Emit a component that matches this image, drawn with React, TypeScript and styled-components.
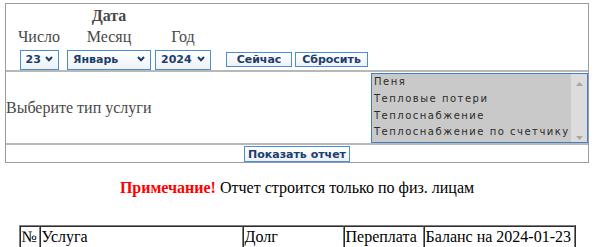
import React from 'react';
import styled, { createGlobalStyle } from 'styled-components';

const GlobalStyle = createGlobalStyle`
  html, body { margin: 0; padding: 0; background: #fff; }
  body {
    font-family: "Liberation Serif", "Times New Roman", serif;
    font-size: 16px;
    color: #000;
  }
`;

const Page = styled.div`
  width: 584px;
  padding: 3px 0 0 5px;
`;

const Panel = styled.div`
  width: 584px;
  box-sizing: border-box;
  border: 1px solid #9c9c9c;
  display: flex;
  flex-direction: column;
`;

const DateRow = styled.div`
  height: 68px;
  box-sizing: border-box;
  padding: 3px 0 0 9px;
  border-bottom: 2px solid #b8b8b8;
`;

const DateGrid = styled.div`
  display: grid;
  grid-template-columns: 48px 92px 56px auto;
  grid-template-rows: 18px 18px 20px;
  row-gap: 3px;
  align-items: center;
  justify-items: center;
`;

const Caption = styled.div<{ $col: number; $row: number; $bold?: boolean }>`
  grid-column: ${(p) => p.$col};
  grid-row: ${(p) => p.$row};
  line-height: 18px;
  color: #484848;
  font-weight: ${(p) => (p.$bold ? 'bold' : 'normal')};
  white-space: nowrap;
`;

const SelectWrap = styled.div<{ $col: number; $w: number }>`
  grid-column: ${(p) => p.$col};
  grid-row: 3;
  position: relative;
  width: ${(p) => p.$w}px;
  height: 20px;
`;

const NativeSelect = styled.select`
  appearance: none;
  -webkit-appearance: none;
  width: 100%;
  height: 20px;
  box-sizing: border-box;
  margin: 0;
  padding: 0 0 0 5px;
  border: 1px solid #4a8dd3;
  border-radius: 0;
  background: linear-gradient(#ffffff, #eef3f9);
  font-family: "DejaVu Sans", Verdana, sans-serif;
  font-size: 11px;
  font-weight: bold;
  color: #1d3d6b;
  outline: none;
`;

const Chevron = styled.svg`
  position: absolute;
  right: 6px;
  top: 7px;
  pointer-events: none;
`;

const ButtonGroup = styled.div`
  grid-column: 4;
  grid-row: 3;
  justify-self: start;
  margin-left: 15px;
  display: flex;
  gap: 3px;
  align-items: center;
`;

const BlueButton = styled.button<{ $w: number; $h?: number }>`
  width: ${(p) => p.$w}px;
  height: ${(p) => p.$h ?? 15}px;
  box-sizing: border-box;
  margin: 0;
  padding: 0;
  border: 1px solid #4a8dd3;
  border-radius: 0;
  background: linear-gradient(#ffffff, #edf2f8);
  font-family: "DejaVu Sans", Verdana, sans-serif;
  font-size: 11px;
  font-weight: bold;
  color: #1d3d6b;
  line-height: 1;
  white-space: nowrap;
`;

const ServiceRow = styled.div`
  height: 73px;
  box-sizing: border-box;
  border-bottom: 2px solid #b8b8b8;
  display: flex;
  align-items: center;
  justify-content: space-between;
`;

const ServiceLabel = styled.div`
  color: #484848;
  line-height: 18px;
`;

const ListBox = styled.div`
  align-self: flex-start;
  margin-top: 1px;
  width: 217px;
  height: 70px;
  box-sizing: border-box;
  border: 1px solid #3f7fc4;
  background: #c9c9c9;
  display: flex;
`;

const Options = styled.div`
  flex: 1;
  overflow: hidden;
  padding-top: 0.3px;
`;

const Option = styled.div`
  height: 16.7px;
  line-height: 16.7px;
  padding-left: 2px;
  font-family: "DejaVu Sans", Verdana, sans-serif;
  font-size: 10px;
  letter-spacing: 1.5px;
  color: #2b2b2b;
  white-space: nowrap;
`;

const ScrollTrack = styled.div`
  width: 16px;
  background: #dcdcdc;
  display: flex;
  flex-direction: column;
  justify-content: space-between;
  align-items: center;
  padding: 8px 0 2px;
  box-sizing: border-box;
`;

const ActionRow = styled.div`
  height: 17px;
  display: flex;
  justify-content: center;
  align-items: flex-end;
`;

const Note = styled.p`
  margin: 16px 0 28px;
  text-align: center;
`;

const Warn = styled.b`
  color: #ff0000;
`;

const ReportTable = styled.table`
  margin: 0 auto;
  width: 557px;
  table-layout: fixed;
  border-collapse: separate;
  border-spacing: 0;
  border: 1px outset grey;
  font-family: "Liberation Serif", "Times New Roman", serif;
  font-size: 16px;
`;

const Col = styled.col<{ $w: number }>`
  width: ${(p) => p.$w}px;
`;

const Cell = styled.td`
  border: 1px inset grey;
  padding: 1px;
  text-align: left;
  white-space: nowrap;
`;

const ChevronIcon = () => (
  <Chevron width="8" height="6" viewBox="0 0 8 6">
    <polyline points="1,1 4,4.2 7,1" fill="none" stroke="#1d3d6b" strokeWidth="2" />
  </Chevron>
);

const Arrow = ({ up }: { up?: boolean }) => (
  <svg width="7" height="4" viewBox="0 0 7 4">
    <polygon points={up ? '0,4 3.5,0 7,4' : '0,0 3.5,4 7,0'} fill="#a6a6a6" />
  </svg>
);

const Select = ({ col, w, value, options }: { col: number; w: number; value: string; options: string[] }) => (
  <SelectWrap $col={col} $w={w}>
    <NativeSelect defaultValue={value}>
      {options.map((o) => (
        <option key={o} value={o}>
          {o}
        </option>
      ))}
    </NativeSelect>
    <ChevronIcon />
  </SelectWrap>
);

const days = Array.from({ length: 31 }, (_, i) => String(i + 1));
const months = ['Январь', 'Февраль', 'Март', 'Апрель', 'Май', 'Июнь', 'Июль', 'Август', 'Сентябрь', 'Октябрь', 'Ноябрь', 'Декабрь'];
const years = ['2022', '2023', '2024', '2025'];
const services = ['Пеня', 'Тепловые потери', 'Теплоснабжение', 'Теплоснабжение по счетчику'];
const columns = [
  { w: 20, t: '№' },
  { w: 203, t: 'Услуга' },
  { w: 101, t: 'Долг' },
  { w: 80, t: 'Переплата' },
  { w: 151, t: 'Баланс на 2024-01-23' },
];

export default function App() {
  return (
    <>
      <GlobalStyle />
      <Page>
        <Panel>
          <DateRow>
            <DateGrid>
              <Caption $col={2} $row={1} $bold>
                Дата
              </Caption>
              <Caption $col={1} $row={2}>
                Число
              </Caption>
              <Caption $col={2} $row={2}>
                Месяц
              </Caption>
              <Caption $col={3} $row={2}>
                Год
              </Caption>
              <Select col={1} w={39} value="23" options={days} />
              <Select col={2} w={84} value="Январь" options={months} />
              <Select col={3} w={56} value="2024" options={years} />
              <ButtonGroup>
                <BlueButton $w={66}>Сейчас</BlueButton>
                <BlueButton $w={73}>Сбросить</BlueButton>
              </ButtonGroup>
            </DateGrid>
          </DateRow>
          <ServiceRow>
            <ServiceLabel>Выберите тип услуги</ServiceLabel>
            <ListBox>
              <Options>
                {services.map((s) => (
                  <Option key={s}>{s}</Option>
                ))}
              </Options>
              <ScrollTrack>
                <Arrow up />
                <Arrow />
              </ScrollTrack>
            </ListBox>
          </ServiceRow>
          <ActionRow>
            <BlueButton $w={106} $h={16}>
              Показать отчет
            </BlueButton>
          </ActionRow>
        </Panel>
        <Note>
          <Warn>Примечание!</Warn> Отчет строится только по физ. лицам
        </Note>
        <ReportTable>
          <colgroup>
            {columns.map((c) => (
              <Col key={c.t} $w={c.w} />
            ))}
          </colgroup>
          <tbody>
            <tr>
              {columns.map((c) => (
                <Cell key={c.t}>{c.t}</Cell>
              ))}
            </tr>
          </tbody>
        </ReportTable>
      </Page>
    </>
  );
}
